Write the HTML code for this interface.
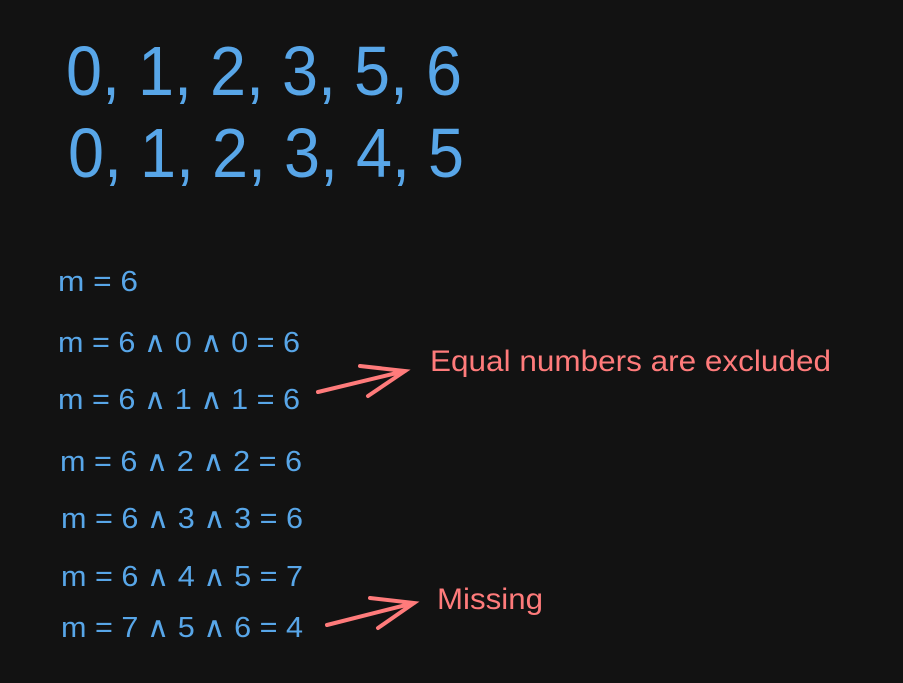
<html><body style="margin:0;background:#121212">
<svg width="903" height="683" xmlns="http://www.w3.org/2000/svg" style="display:block">
<rect width="903" height="683" fill="#121212"/>
<g font-family="Liberation Sans, sans-serif" fill="#58a6e8">
<text x="66" y="95" font-size="70" textLength="396" lengthAdjust="spacingAndGlyphs">0, 1, 2, 3, 5, 6</text>
<text x="68" y="177" font-size="70" textLength="396" lengthAdjust="spacingAndGlyphs">0, 1, 2, 3, 4, 5</text>
<g font-size="29">
<text x="58" y="291" textLength="80" lengthAdjust="spacingAndGlyphs">m = 6</text>
<text x="58" y="352" textLength="242" lengthAdjust="spacingAndGlyphs">m = 6 ∧ 0 ∧ 0 = 6</text>
<text x="58" y="409" textLength="242" lengthAdjust="spacingAndGlyphs">m = 6 ∧ 1 ∧ 1 = 6</text>
<text x="60" y="471" textLength="242" lengthAdjust="spacingAndGlyphs">m = 6 ∧ 2 ∧ 2 = 6</text>
<text x="61" y="528" textLength="242" lengthAdjust="spacingAndGlyphs">m = 6 ∧ 3 ∧ 3 = 6</text>
<text x="61" y="586" textLength="242" lengthAdjust="spacingAndGlyphs">m = 6 ∧ 4 ∧ 5 = 7</text>
<text x="61" y="637" textLength="242" lengthAdjust="spacingAndGlyphs">m = 7 ∧ 5 ∧ 6 = 4</text>
</g>
</g>
<g font-family="Liberation Sans, sans-serif" fill="#ff7b7b" font-size="30">
<text x="430" y="371" textLength="401" lengthAdjust="spacingAndGlyphs">Equal numbers are excluded</text>
<text x="437" y="609" textLength="106" lengthAdjust="spacingAndGlyphs">Missing</text>
</g>
<g stroke="#ff7b7b" stroke-width="4" stroke-linecap="round" fill="none">
<path d="M318 392 L405 371 M360 366 L405 371 L368 396"/>
<path d="M327 625 L414 603 M370 598 L414 603 L378 628"/>
</g>
</svg>
</body></html>
